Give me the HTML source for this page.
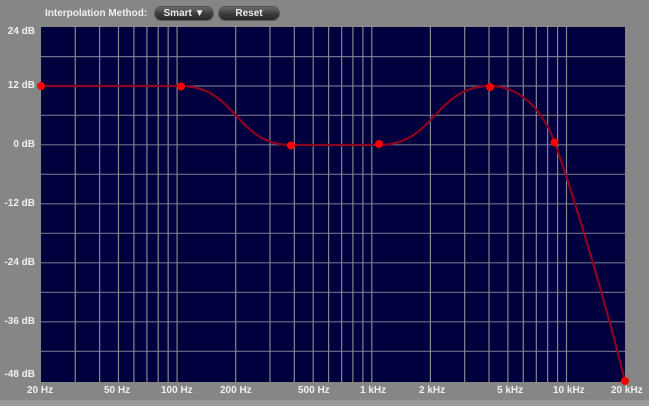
<!DOCTYPE html>
<html><head><meta charset="utf-8"><style>
html,body{margin:0;padding:0;}
body{width:649px;height:406px;background:#868686;position:relative;overflow:hidden;font-family:"Liberation Sans",Arial,sans-serif;}
.t{position:absolute;color:#f0f0f0;font-size:10px;font-weight:bold;white-space:nowrap;}
.btn{position:absolute;top:7px;height:13px;border-radius:7px;background:linear-gradient(#6a6a6a,#3a3a3a 55%,#2a2a2a);box-shadow:0 0 0 1px #555;color:#eee;font-size:10px;font-weight:bold;text-align:center;line-height:13px;}
.bottom{position:absolute;left:0;top:400px;width:649px;height:6px;background:#9a9a9a;}
</style></head><body>
<div class="t" style="left:45px;top:8px;">Interpolation Method:</div>
<div class="btn" style="left:155px;width:58px;">Smart &#9660;</div>
<div class="btn" style="left:219px;width:60px;">Reset</div>
<svg style="position:absolute;left:0;top:0" width="649" height="406">
<rect x="41" y="27" width="584" height="355" fill="#00003e"/>
<g stroke="#70708a" stroke-width="1.2">
<line x1="41" x2="625" y1="56.6" y2="56.6"/><line x1="41" x2="625" y1="86" y2="86"/>
<line x1="41" x2="625" y1="115.3" y2="115.3"/><line x1="41" x2="625" y1="144.8" y2="144.8"/>
<line x1="41" x2="625" y1="174.3" y2="174.3"/><line x1="41" x2="625" y1="203.8" y2="203.8"/>
<line x1="41" x2="625" y1="233.3" y2="233.3"/><line x1="41" x2="625" y1="262.8" y2="262.8"/>
<line x1="41" x2="625" y1="292.3" y2="292.3"/><line x1="41" x2="625" y1="321.8" y2="321.8"/>
<line x1="41" x2="625" y1="351.3" y2="351.3"/>
</g>
<g stroke="#85858f" stroke-width="1.2" id="v"></g>
<path d="M41,86 L181,86 C236,86 236,145 291,145 L379,145 C435,145 435,86 490,86 C520,86 543,110 555,143 C575,200 605,300 625,381" fill="none" stroke="#8c0020" stroke-width="2.2"/>
<g fill="#ff0000">
<circle cx="41" cy="86" r="4"/><circle cx="181" cy="86.5" r="4"/><circle cx="291" cy="145.5" r="4"/>
<circle cx="379" cy="144" r="4"/><circle cx="490" cy="87" r="4"/><circle cx="554.5" cy="142.5" r="4"/>
<circle cx="625" cy="381" r="4"/>
</g>
</svg>
<script>
var g=document.getElementById('v'),s='';
[30,40,50,60,70,80,90,100,200,300,400,500,600,700,800,900,1000,2000,3000,4000,5000,6000,7000,8000,9000,10000].forEach(function(f){var x=41+Math.log10(f/20)*194.7;s+='<line x1="'+x+'" x2="'+x+'" y1="27" y2="382"/>';});
g.innerHTML=s;
</script>
<div class="t" style="right:614px;top:26px;">24 dB</div>
<div class="t" style="right:614px;top:80px;">12 dB</div>
<div class="t" style="right:614px;top:139px;">0 dB</div>
<div class="t" style="right:614px;top:198px;">-12 dB</div>
<div class="t" style="right:614px;top:257px;">-24 dB</div>
<div class="t" style="right:614px;top:316px;">-36 dB</div>
<div class="t" style="right:614px;top:369px;">-48 dB</div>
<div class="t" style="left:27px;top:385px;">20 Hz</div>
<div class="t" style="left:104px;top:385px;">50 Hz</div>
<div class="t" style="left:161px;top:385px;">100 Hz</div>
<div class="t" style="left:220px;top:385px;">200 Hz</div>
<div class="t" style="left:298px;top:385px;">500 Hz</div>
<div class="t" style="left:360px;top:385px;">1 kHz</div>
<div class="t" style="left:419px;top:385px;">2 kHz</div>
<div class="t" style="left:497px;top:385px;">5 kHz</div>
<div class="t" style="left:553px;top:385px;">10 kHz</div>
<div class="t" style="left:611px;top:385px;">20 kHz</div>
<div class="bottom"></div>
</body></html>
